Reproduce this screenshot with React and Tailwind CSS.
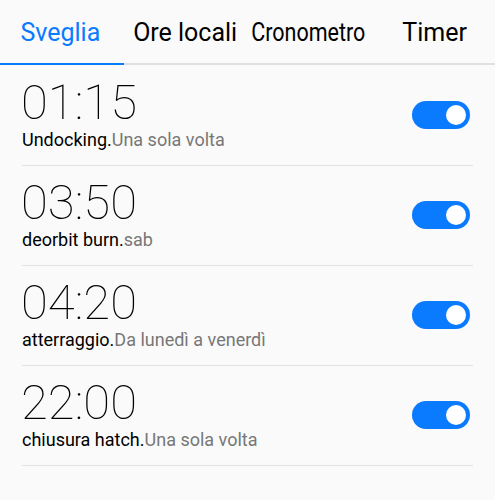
const tabs = ["Sveglia", "Ore locali", "Cronometro", "Timer"];

const alarms = [
	{ time: "01:15", name: "Undocking.", repeat: "Una sola volta" },
	{ time: "03:50", name: "deorbit burn.", repeat: "sab" },
	{ time: "04:20", name: "atterraggio.", repeat: "Da lunedì a venerdì" },
	{ time: "22:00", name: "chiusura hatch.", repeat: "Una sola volta" },
];

const Toggle = () => (
	<div className="w-[58px] h-[28px] rounded-full bg-[#0a7aff] flex items-center justify-end pr-[4px]">
		<div className="w-[20px] h-[20px] rounded-full bg-white"></div>
	</div>
);

export default function App() {
	return (
		<div
			className="w-[495px] h-[500px] bg-[#fafafa] overflow-hidden"
			style={{ fontFamily: "Roboto, 'Noto Sans', sans-serif" }}
		>
			<div className="flex h-[63px] pt-[3px]">
				{tabs.map((tab, i) => (
					<div
						key={tab}
						className={`flex-1 flex items-center justify-center text-[25px] ${
							i === 0 ? "text-[#0a7aff]" : "text-black"
						}`}
					>
						<span
							className={
								tab === "Cronometro"
									? "inline-block scale-x-[0.86]"
									: tab === "Ore locali"
									? "ml-[8px]"
									: ""
							}
						>
							{tab}
						</span>
					</div>
				))}
			</div>
			<div className="flex h-[2px] bg-[#e0e0e0]">
				<div className="w-[124px] bg-[#0a7aff]"></div>
			</div>

			<div className="px-[22px] pt-[1px]">
				{alarms.map((alarm) => (
					<div
						key={alarm.time}
						className="h-[100px] border-b border-[#e2e2e2] flex items-center justify-between pr-[3px]"
					>
						<div className="flex flex-col pb-[4px]">
							<span className="text-[49px] font-thin leading-none text-black -ml-[1px]">
								{alarm.time}
							</span>
							<span className="text-[18px] leading-none mt-[4px]">
								<span className="text-black">{alarm.name}</span>
								<span className="text-[#777]">{alarm.repeat}</span>
							</span>
						</div>
						<div className="pb-[1px]">
							<Toggle />
						</div>
					</div>
				))}
			</div>
		</div>
	);
}
